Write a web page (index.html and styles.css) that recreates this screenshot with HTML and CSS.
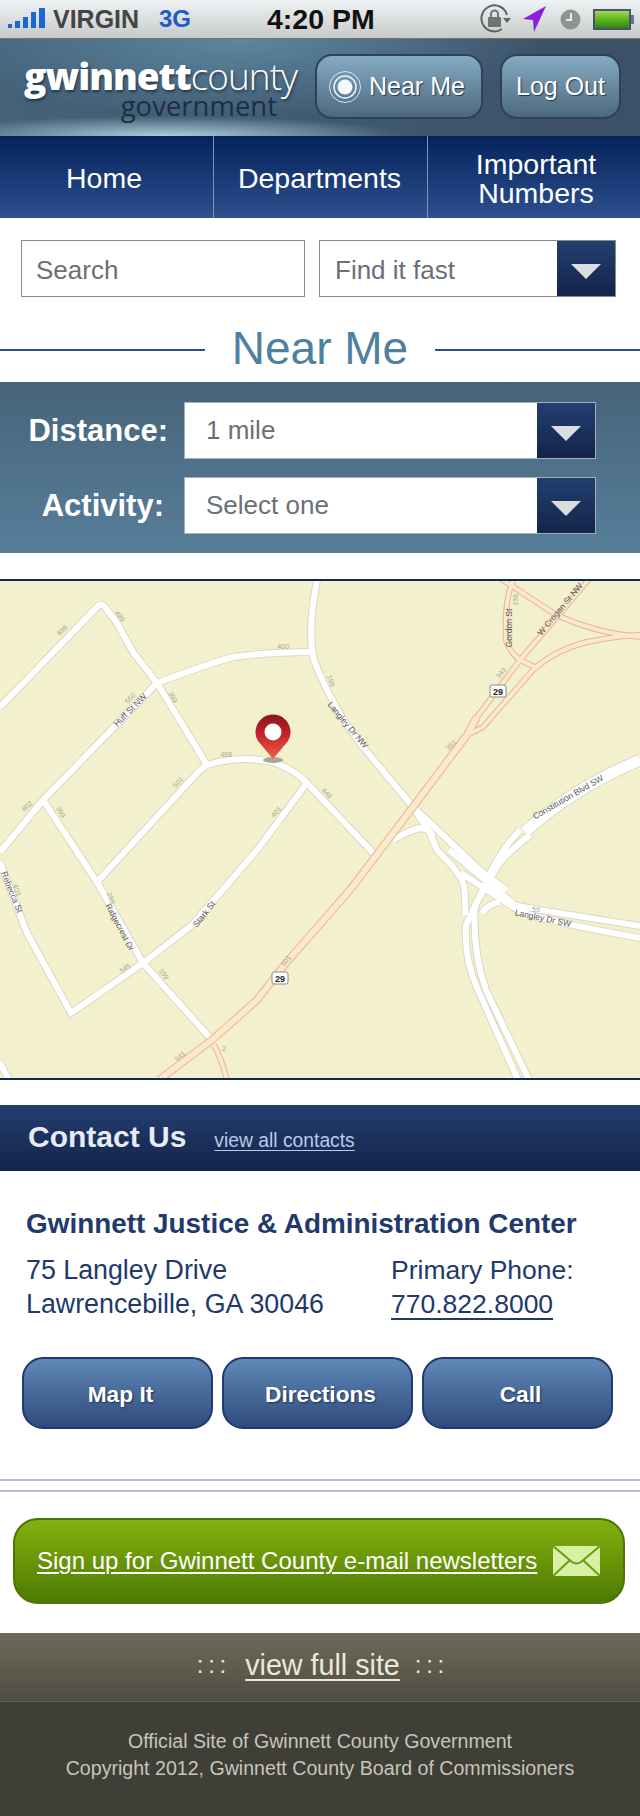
FILE: index.html
```html
<!DOCTYPE html>
<html lang="en">
<head>
    <meta charset="UTF-8">
    <meta name="viewport" content="width=device-width, initial-scale=1.0">
    <title>Near Me - Gwinnett County Government</title>
    <link rel="stylesheet" href="styles.css">
</head>
<body>
    <div id="status">
        <svg class="signal" width="38" height="24" viewBox="0 0 38 24">
            <rect x="0" y="19" width="4" height="4"/>
            <rect x="7" y="16" width="5" height="7"/>
            <rect x="15" y="12" width="5" height="11"/>
            <rect x="23" y="7" width="5" height="16"/>
            <rect x="31" y="3" width="6" height="20"/>
        </svg>
        <span class="carrier">VIRGIN</span>
        <span class="net">3G</span>
        <span class="time">4:20 PM</span>
        <svg class="lock" width="32" height="32" viewBox="0 0 32 32">
            <path d="M23 26A13 13 0 1 1 28 12" fill="none" stroke="#5d6465" stroke-width="2"/>
            <path d="M24 15h8l-4 5z" fill="#5d6465"/>
            <rect x="9" y="14" width="13" height="10" rx="1" fill="#6d7474"/>
            <path d="M12 14v-3a3.500 3.500 0 0 1 7 0v3" fill="none" stroke="#6d7474" stroke-width="2"/>
        </svg>
        <svg class="locate" width="24" height="26" viewBox="0 0 24 26">
            <path d="M0 13L23 0L11 26L10 14z" fill="#8a1fe0"/>
        </svg>
        <svg class="clock" width="21" height="21" viewBox="0 0 21 21">
            <circle cx="10.500" cy="10.500" r="10" fill="#8b9592"/>
            <path d="M11 4v7H6" fill="none" stroke="#e8ecea" stroke-width="2"/>
        </svg>
        <svg class="battery" width="42" height="21" viewBox="0 0 42 21">
            <defs>
                <linearGradient id="batt" x1="0" y1="0" x2="0" y2="1">
                    <stop offset="0" stop-color="#a8e05a"/>
                    <stop offset="0.5" stop-color="#5cb51c"/>
                    <stop offset="1" stop-color="#2f7f10"/>
                </linearGradient>
            </defs>
            <rect x="1" y="1" width="36" height="19" fill="url(#batt)" stroke="#4b5270" stroke-width="2"/>
            <rect x="38" y="6" width="3" height="9" fill="#6c7390"/>
        </svg>
    </div>

    <div id="header">
        <div class="logo">
            <div class="logo-top"><b>gwinnett</b>county</div>
            <div class="logo-sub">government</div>
        </div>
        <a class="hbtn near">
            <svg width="34" height="34" viewBox="0 0 34 34">
                <circle cx="17" cy="17" r="15.500" fill="none" stroke="#d4e4ee" stroke-width="1"/>
                <circle cx="17" cy="17" r="11" fill="none" stroke="#e8f2f8" stroke-width="1.500"/>
                <circle cx="17" cy="17" r="7.500" fill="#f0faff"/>
            </svg>
            Near Me
        </a>
        <a class="hbtn logout">Log Out</a>
    </div>

    <div id="nav">
        <a class="navitem">Home</a>
        <a class="navitem">Departments</a>
        <a class="navitem">Important<br>Numbers</a>
    </div>

    <div id="search">
        <div class="box searchbox">Search</div>
        <div class="box findbox">
            <span class="boxtext">Find it fast</span>
            <span class="arrow"></span>
        </div>
    </div>

    <div id="titlerow">
        <span class="rule"></span>
        <h1>Near Me</h1>
        <span class="rule"></span>
    </div>

    <div id="filters">
        <div class="filter">
            <label class="dist">Distance:</label>
            <div class="box selectbox">
                <span class="boxtext">1 mile</span>
                <span class="arrow"></span>
            </div>
        </div>
        <div class="filter">
            <label class="act">Activity:</label>
            <div class="box selectbox">
                <span class="boxtext">Select one</span>
                <span class="arrow"></span>
            </div>
        </div>
    </div>

    <div id="map">
        <svg width="640" height="497" viewBox="0 581 640 497">
            <defs>
                <linearGradient id="pin" x1="0" y1="0" x2="0" y2="1">
                    <stop offset="0" stop-color="#85181d"/>
                    <stop offset="0.4" stop-color="#bf1f28"/>
                    <stop offset="1" stop-color="#f0604c"/>
                </linearGradient>
                <g id="roads">
                    <path d="M0 707L97 607Q100 603 104 606L117 623L133 652L157 683L207 765"/>
                    <path d="M157 683L43 800L0 852"/>
                    <path d="M157 683Q205 665 233 657Q270 652 312 652"/>
                    <path d="M317 581Q307 630 314 660Q325 690 345 722L363 747L413 807L430 823L483 873L507 890"/>
                    <path d="M43 800L97 882"/>
                    <path d="M97 882L143 963L212 1040"/>
                    <path d="M207 765Q240 755 273 762Q295 770 307 783L375 855"/>
                    <path d="M207 765L200 770L97 882"/>
                    <path d="M307 783L257 850L220 893L192 925L143 963L71 1013L27 933L0 862"/>
                    <path d="M0 1063L9 1080"/>
                    <path d="M393 840Q410 830 420 828Q428 828 433 836"/>
                    <path d="M482 913Q488 904 500 902"/>
                    <path d="M413 807L430 833L437 850L453 867L462 880Q466 890 465 915"/>
                    <path d="M520 830Q500 850 486 883L466 925Q464 960 478 990L518 1080"/>
                    <path d="M530 835Q510 850 498 865L475 905Q472 950 486 990L529 1080"/>
                    <path d="M449 850L515 905Q525 908 640 926"/>
                    <path d="M461 873L518 910Q530 918 640 938"/>
                </g>
                <g id="wideroads">
                    <path d="M640 760Q570 790 525 832"/>
                </g>
                <g id="highways">
                    <path d="M159 1080L212 1040L257 1000L286 963L350 890L413 807L467 735L477 717"/>
                </g>
                <g id="branches">
                    <path d="M467 735L477 717L520 660L590 578"/>
                    <path d="M467 735L483 727L533 670Q555 650 587 642Q615 636 640 635"/>
                    <path d="M500 578L553 613Q590 632 640 637"/>
                    <path d="M513 581Q504 600 506 640Q508 650 520 660L537 668"/>
                    <path d="M214 1045Q222 1060 227 1080"/>
                </g>
            </defs>
            <rect x="0" y="581" width="640" height="497" fill="#f3f0cd"/>
            <use href="#roads" class="casing"/>
            <use href="#wideroads" class="casing wide"/>
            <use href="#roads" class="road"/>
            <use href="#wideroads" class="road wide"/>
            <use href="#branches" class="br-case"/>
            <use href="#highways" class="hw-case"/>
            <use href="#branches" class="br"/>
            <use href="#highways" class="hw"/>

            <text class="street" transform="translate(130 710) rotate(-45)">Huff St NW</text>
            <text class="street" transform="translate(348 725) rotate(50)">Langley Dr NW</text>
            <text class="street" transform="translate(509 628) rotate(-90)">Gordon St</text>
            <text class="street" transform="translate(560 609) rotate(-50)">W Crogan St NW</text>
            <text class="street" transform="translate(568 797) rotate(-30)">Constitution Blvd SW</text>
            <text class="street" transform="translate(543 918) rotate(12)">Langley Dr SW</text>
            <text class="street" transform="translate(12 892) rotate(68)">Rebecca St</text>
            <text class="street" transform="translate(120 927) rotate(62)">Ridgecrest Dr</text>
            <text class="street" transform="translate(204 914) rotate(-52)">Stark St</text>

            <text class="num" transform="translate(62 630) rotate(-45)">698</text>
            <text class="num" transform="translate(120 616) rotate(55)">499</text>
            <text class="num" transform="translate(283 646)">400</text>
            <text class="num" transform="translate(173 697) rotate(60)">399</text>
            <text class="num" transform="translate(130 698) rotate(-45)">550</text>
            <text class="num" transform="translate(226 754)">498</text>
            <text class="num" transform="translate(178 782) rotate(-45)">501</text>
            <text class="num" transform="translate(27 806) rotate(-40)">802</text>
            <text class="num" transform="translate(61 812) rotate(60)">399</text>
            <text class="num" transform="translate(276 812) rotate(-50)">401</text>
            <text class="num" transform="translate(515 600) rotate(-90)">198</text>
            <text class="num" transform="translate(501 673) rotate(-50)">343</text>
            <text class="num" transform="translate(451 745) rotate(-45)">351</text>
            <text class="num" transform="translate(331 681) rotate(70)">199</text>
            <text class="num" transform="translate(327 793) rotate(45)">448</text>
            <text class="num" transform="translate(17 890) rotate(70)">403</text>
            <text class="num" transform="translate(111 898) rotate(70)">299</text>
            <text class="num" transform="translate(125 968) rotate(-35)">545</text>
            <text class="num" transform="translate(164 974) rotate(55)">199</text>
            <text class="num" transform="translate(286 961) rotate(-50)">501</text>
            <text class="num" transform="translate(180 1056) rotate(-40)">541</text>
            <text class="num" transform="translate(224 1048)">2</text>
            <text class="num" transform="translate(536 909)">59</text>

            <rect class="shield" x="490" y="685" width="16" height="12" rx="2"/>
            <text class="shieldnum" x="498" y="694.500">29</text>
            <rect class="shield" x="272" y="972" width="16" height="12" rx="2"/>
            <text class="shieldnum" x="280" y="981.500">29</text>

            <ellipse cx="273" cy="760" rx="10" ry="3" fill="#a9a897"/>
            <path d="M273 759L258 741A17.500 17.500 0 1 1 288 741Z" fill="url(#pin)"/>
            <circle cx="273" cy="732" r="8.500" fill="#fff"/>
        </svg>
    </div>

    <div id="contacthead">
        <h2>Contact Us</h2>
        <a>view all contacts</a>
    </div>

    <div id="contact">
        <h3>Gwinnett Justice &amp; Administration Center</h3>
        <div class="cols">
            <div class="addr">75 Langley Drive<br>Lawrencebille, GA 30046</div>
            <div class="phone">Primary Phone:<br><a>770.822.8000</a></div>
        </div>
        <div class="btns">
            <a class="cbtn">Map It</a>
            <a class="cbtn">Directions</a>
            <a class="cbtn">Call</a>
        </div>
    </div>

    <div id="newsletter">
        <a class="green">
            <span>Sign up for Gwinnett County e-mail newsletters</span>
            <svg width="47" height="30" viewBox="0 0 47 30">
                <rect width="47" height="30" fill="#d6f0a4"/>
                <path d="M0 0L19 16Q23.500 19 28 16L47 0" fill="none" stroke="#6b9a0c" stroke-width="2"/>
                <path d="M0 30L17 14M47 30L30 14" fill="none" stroke="#6b9a0c" stroke-width="2"/>
            </svg>
        </a>
    </div>

    <div id="fullsite">
        <span class="dots">: : :</span>
        <a>view full site</a>
        <span class="dots">: : :</span>
    </div>

    <div id="footer">
        Official Site of Gwinnett County Government<br>
        Copyright 2012, Gwinnett County Board of Commissioners
    </div>
</body>
</html>
```

FILE: styles.css
```css
body{
    margin: 0;
    width: 640px;
    background: #fff;
    font-family: "Liberation Sans", Arial, sans-serif;
}
a{
    color: inherit;
}
h1,h2,h3{
    margin: 0;
}

/* status bar */
#status{
    height: 38px;
    display: flex;
    align-items: center;
    background: linear-gradient(#eff3f5, #c6cac9);
    border-bottom: 1px solid #6f7272;
    font-weight: bold;
    white-space: nowrap;
}
.signal{
    margin: 0 0 4px 8px;
    fill: #1b66d0;
}
.carrier{
    margin-left: 7px;
    font-size: 25px;
    color: #444;
    width: 106px;
}
.net{
    font-size: 24px;
    color: #1c5cc8;
    width: 108px;
}
.time{
    font-size: 28.500px;
    color: #111;
    width: 210px;
}
.lock{
    margin-left: 2px;
}
.locate{
    margin-left: 12px;
}
.clock{
    margin-left: 13px;
}
.battery{
    margin-left: 12px;
}

/* header */
#header{
    height: 97px;
    display: flex;
    align-items: flex-start;
    background:
        radial-gradient(ellipse 240px 20px at 165px 100%, rgba(190,225,232,.85), rgba(190,225,232,0)),
        radial-gradient(ellipse 300px 80px at 240px 0, rgba(100,145,170,.8), rgba(100,145,170,0)),
        linear-gradient(90deg, #44627a, #3c5067);
    color: #fff;
}
.logo{
    width: 275px;
    margin: 17px 0 0 22px;
    text-align: right;
    font-family: "Open Sans", sans-serif;
    flex: none;
}
.logo-top{
    font-size: 37px;
    line-height: 40px;
    font-weight: 300;
    letter-spacing: -1px;
    text-shadow: 1px 2px 3px rgba(0,0,0,.5);
    white-space: nowrap;
}
.logo-sub{
    font-size: 27.500px;
    line-height: 28px;
    color: #1f2f3c;
    padding-right: 20px;
    margin-top: -4px;
}
.logo-top b{
    font-weight: 800;
}
.hbtn{
    box-sizing: border-box;
    height: 65px;
    margin-top: 15px;
    display: flex;
    align-items: center;
    justify-content: center;
    border: 2px solid #2c4256;
    border-radius: 17px;
    background: linear-gradient(#84abc3, #4c687e);
    font-size: 25px;
    text-shadow: 1px 1px 1px #233648;
}
.near{
    width: 168px;
    margin-left: 18px;
    gap: 7px;
    justify-content: flex-start;
    padding-left: 11px;
}
.logout{
    width: 121px;
    margin-left: 17px;
}

/* nav */
#nav{
    height: 82px;
    display: flex;
    background: linear-gradient(#05235b, #2d508e);
    color: #fff;
}
.navitem{
    width: 214px;
    padding-top: 3px;
    display: flex;
    align-items: center;
    justify-content: center;
    text-align: center;
    font-size: 28.500px;
    line-height: 29px;
    border-right: 1px solid #7f93b5;
    box-sizing: border-box;
}
.navitem:nth-child(1){
    padding-right: 5px;
}
.navitem:nth-child(2){
    padding-right: 2px;
}
.navitem:last-child{
    width: 212px;
    padding-left: 4px;
    border-right: 0;
}

/* search */
#search{
    display: flex;
    padding: 22px 24px 0 21px;
    gap: 14px;
}
.box{
    box-sizing: border-box;
    height: 57px;
    display: flex;
    align-items: center;
    background: #fff;
    border: 1px solid #8b8b8b;
    font-size: 26px;
    color: #6a7076;
}
.searchbox{
    width: 284px;
    padding: 3px 0 0 14px;
}
.findbox{
    width: 297px;
}
.findbox .boxtext{
    padding: 3px 0 0 15px;
}
.boxtext{
    flex: 1;
}
.arrow{
    width: 58px;
    height: 100%;
    display: flex;
    align-items: center;
    justify-content: center;
    background: linear-gradient(#223f70, #14244a);
}
.arrow::after{
    content: "";
    margin-top: 6px;
    border-style: solid;
    border-width: 15px 15px 0;
    border-color: #dcdde0 transparent transparent;
}

/* title */
#titlerow{
    height: 64px;
    margin-top: 21px;
    display: flex;
    align-items: center;
}
.rule{
    flex: 1;
    height: 2px;
    background: #2a4f92;
}
h1{
    padding: 0 27px;
    margin-bottom: 5px;
    font-size: 46px;
    font-weight: normal;
    color: #4f80a0;
}

/* filters */
#filters{
    height: 171px;
    box-sizing: border-box;
    padding-top: 20px;
    background: linear-gradient(#46647b, #587e9a);
}
.filter{
    display: flex;
    align-items: center;
    margin-bottom: 18px;
}
.filter label{
    width: 184px;
    box-sizing: border-box;
    font-size: 31px;
    font-weight: bold;
    color: #fff;
    text-align: right;
}
.dist{
    padding-right: 16px;
}
.act{
    padding-right: 20px;
}
.selectbox{
    width: 412px;
    border-color: #a5adb5;
}
.selectbox .boxtext{
    padding-left: 21px;
}

/* map */
#map{
    margin-top: 26px;
    height: 497px;
    border-top: 2px solid #0a2a60;
    border-bottom: 2px solid #0a2a60;
    line-height: 0;
}
.casing{
    fill: none;
    stroke: #dad9c3;
    stroke-width: 8;
}
.road{
    fill: none;
    stroke: #fff;
    stroke-width: 6;
}
.wide.casing{
    stroke-width: 13;
}
.wide.road{
    stroke-width: 11;
}
.hw-case{
    fill: none;
    stroke: #eab496;
    stroke-width: 8;
}
.hw{
    fill: none;
    stroke: #fbe9cc;
    stroke-width: 6;
}
.br-case{
    fill: none;
    stroke: #eab496;
    stroke-width: 6;
}
.br{
    fill: none;
    stroke: #fbe9cc;
    stroke-width: 4;
}
.street{
    font-size: 8.500px;
    fill: #55565a;
    text-anchor: middle;
    dominant-baseline: central;
}
.num{
    font-size: 7px;
    fill: #a7a792;
    text-anchor: middle;
    dominant-baseline: central;
}
.shield{
    fill: #fff;
    stroke: #8a8a8a;
}
.shieldnum{
    font-size: 9px;
    font-weight: bold;
    fill: #222;
    text-anchor: middle;
}

/* contact */
#contacthead{
    margin-top: 25px;
    height: 66px;
    box-sizing: border-box;
    display: flex;
    align-items: baseline;
    padding: 15px 0 0 28px;
    background: linear-gradient(#223f70, #14244a);
}
h2{
    font-size: 30px;
    color: #e6ebf5;
    margin-right: 28px;
}
#contacthead a{
    font-size: 19.300px;
    color: #b9cbe6;
    text-decoration: underline;
    text-underline-offset: 3px;
}
#contact{
    height: 310px;
    box-sizing: border-box;
    padding: 38px 0 0 26px;
    border-bottom: 2px solid #b0bdd6;
    color: #21396b;
}
h3{
    font-size: 27.900px;
    line-height: 30px;
}
.cols{
    display: flex;
    margin-top: 14px;
    font-size: 26.500px;
    line-height: 34px;
}
.addr{
    width: 365px;
    font-size: 26.800px;
}
.phone a{
    text-decoration: underline;
    text-decoration-thickness: 2px;
    text-underline-offset: 5px;
}
.btns{
    display: flex;
    gap: 9px;
    margin: 36px 0 0 -4px;
}
.cbtn{
    box-sizing: border-box;
    width: 191px;
    height: 72px;
    padding: 2px 0 0 6px;
    display: flex;
    align-items: center;
    justify-content: center;
    border: 2px solid #1f3a70;
    border-radius: 21px;
    background: linear-gradient(#6089b8, #2f4a7c);
    font-size: 22.700px;
    font-weight: bold;
    color: #fff;
    text-shadow: 1px 1px 2px #1c2f55;
}

/* newsletter */
#newsletter{
    margin-top: 9px;
    border-top: 2px solid #b0bdd6;
    padding: 26px 15px 29px 13px;
}
.green{
    box-sizing: border-box;
    height: 86px;
    display: flex;
    align-items: center;
    gap: 16px;
    padding: 0 0 0 22px;
    border: 2px solid #4a7508;
    border-radius: 25px;
    background: linear-gradient(#83b00e, #4e7a02);
    font-size: 24px;
    color: #fff;
}
.green span{
    text-decoration: underline;
    text-decoration-thickness: 2px;
    text-underline-offset: 3px;
    white-space: nowrap;
}

/* footer */
#fullsite{
    box-sizing: border-box;
    height: 69px;
    display: flex;
    align-items: center;
    justify-content: center;
    padding-bottom: 4px;
    background: linear-gradient(#6c6a5c, #4f4e42);
    border-bottom: 1px solid #5e5d50;
    color: #ebe9d8;
    font-size: 28.700px;
}
#fullsite a{
    margin: 0 15px 0 20px;
    text-decoration: underline;
    text-decoration-thickness: 2px;
    text-underline-offset: 4px;
}
.dots{
    font-size: 24px;
    letter-spacing: -1px;
}
#footer{
    height: 114px;
    box-sizing: border-box;
    padding-top: 26px;
    background: #3f3e37;
    color: #c6c6ba;
    font-size: 19.600px;
    line-height: 27px;
    text-align: center;
}
```
